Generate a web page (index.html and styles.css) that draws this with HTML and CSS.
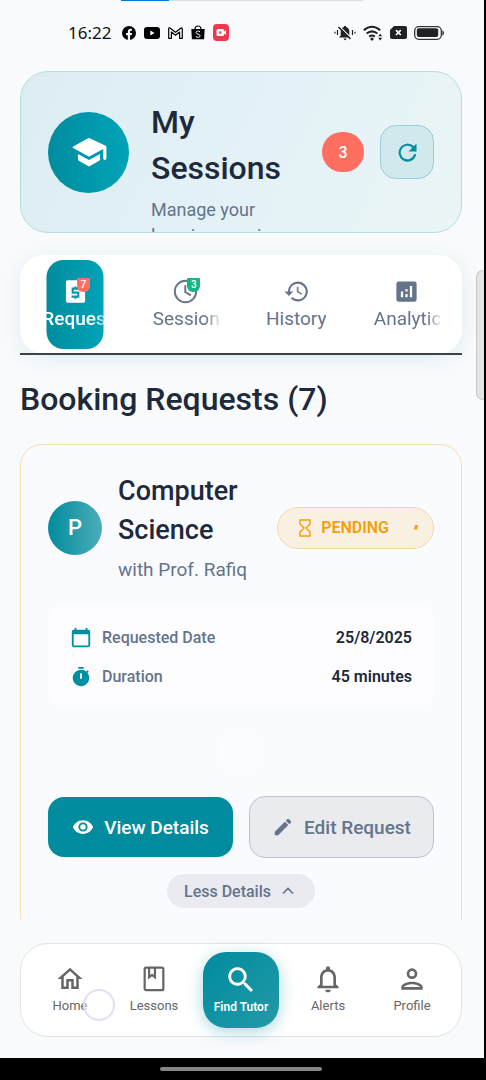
FILE: index.html
```html
<!DOCTYPE html>
<html lang="en">
<head>
<meta charset="utf-8">
<meta name="viewport" content="width=device-width, initial-scale=1">
<title>My Sessions</title>
<link rel="stylesheet" href="styles.css">
</head>
<body>
<div class="app">
  <div class="load-track"><div class="load-bar"></div></div>
  <div class="edge-handle"></div>

  <div class="status">
    <div class="status-left">
      <span class="clock">16:22</span>
      <svg width="14" height="14" viewBox="0 0 24 24"><circle cx="12" cy="12" r="12" fill="#000"/><path d="M10 24v-8H7v-4h3V9.500c0-3.300 1.900-5 4.800-5 1 0 2.200.2 2.200.2V8h-1.500c-1.300 0-1.700.8-1.700 1.600V12h3.300l-.6 4h-2.700v8z" fill="#f8fafc"/></svg>
      <svg width="16" height="12" viewBox="0 0 16 12"><rect width="16" height="12" rx="3" fill="#000"/><path d="M6.300 3.500v5l4.200-2.500z" fill="#fff"/></svg>
      <svg width="15" height="12" viewBox="0 0 15 12"><path d="M.7 11.300V1.700Q.7.700 1.700.8L7.500 5.300 13.300.8q1 0 1 1v9.500h-2.700V5L7.500 8.200 3.400 5v6.300z" fill="none" stroke="#000" stroke-width="1.200" stroke-linejoin="round"/></svg>
      <svg width="14" height="15" viewBox="0 0 14 15"><path d="M.3 4h13.400l-.6 10.200H.9z" fill="#000"/><path d="M4 4c0-4 6-4 6 0" fill="none" stroke="#000" stroke-width="1.100"/><path d="M9 6.800C7.500 5.600 5 6 5.100 7.700c.1 1.600 4 1.200 4 3.100 0 1.800-2.800 1.900-4.200.7" fill="none" stroke="#fff" stroke-width="1"/></svg>
      <svg width="16" height="17" viewBox="0 0 16 17"><rect width="16" height="17" rx="4" fill="#f0384d"/><rect x="3.500" y="5" width="7.500" height="7" rx="1.500" fill="#fff"/><path d="M10.500 8 13 6v5l-2.500-2z" fill="#fff"/><circle cx="7.200" cy="8.500" r="1.200" fill="#f0384d"/></svg>
    </div>
    <div class="status-right">
      <svg width="22" height="16" viewBox="0 0 22 16"><path d="M5 12.500 6.700 10.500V6.500C6.700 4 8.500 2.500 10 2V1h2v1c2 .5 3.300 2 3.300 4.500v4l1.700 2z" fill="#222"/><path d="M9.500 13.500h3q-.5 1.700-1.500 1.700t-1.500-1.700" fill="#222"/><path d="M5.700 1.600 17.700 13.400" stroke="#f8fafc" stroke-width="1.300"/><path d="M4.500 2 16.500 14" stroke="#222" stroke-width="1.500"/><path d="M3.500 5v5M1 6.800v1.600M18.500 5v5M21 6.800v1.600" stroke="#222" stroke-width="1.200"/></svg>
      <svg width="20" height="16" viewBox="0 0 20 16"><g fill="none" stroke="#222" stroke-width="2"><path d="M.8 5.300q8.200-7 16.400 0"/><path d="M3.600 8.600q5.400-4.500 10.800 0"/><path d="M6.200 11.600q2.800-2 5.600 0"/></g><circle cx="9" cy="14" r="1.600" fill="#222"/><path d="m15.200 11.300 2-2.600 2 2.600zM15.200 12.800l2 2.600 2-2.600z" fill="#222"/></svg>
      <svg width="17" height="13" viewBox="0 0 17 13"><path d="M4 0h11q2 0 2 2v9q0 2-2 2H2q-2 0-2-2V4z" fill="#222"/><path d="m6 4.200 4.800 4.800m0-4.800L6 9" stroke="#fff" stroke-width="1.700"/></svg>
      <svg width="30" height="14" viewBox="0 0 30 14"><rect x=".7" y=".7" width="26.600" height="12.600" rx="4" fill="#fff" stroke="#333" stroke-width="1.300"/><rect x="2.800" y="2.300" width="21.400" height="8.800" rx="2" fill="#222"/><path d="M28.300 4.300q1.700.5 1.700 2.700t-1.700 2.700z" fill="#333"/></svg>
    </div>
  </div>

  <header class="hero">
    <div class="hero-icon">
      <svg width="38" height="38" viewBox="0 0 24 24" fill="#fff"><path d="M5 13.200v3.400a1.200 1.200 0 0 0 .6 1l5.800 3.200a1.200 1.200 0 0 0 1.200 0l5.800-3.200a1.200 1.200 0 0 0 .6-1v-3.400l-7 3.800zM11.500 3.300 2 8.500a.6.600 0 0 0 0 1l9.500 5.200a1 1 0 0 0 1 0l8.500-4.600V16a1 1 0 0 0 2 0V9a1 1 0 0 0-.5-.9l-10-4.800a1 1 0 0 0-1 0z"/></svg>
    </div>
    <div class="hero-text">
      <h1>My Sessions</h1>
      <p>Manage your learning sessions</p>
    </div>
    <span class="hero-count">3</span>
    <button class="refresh" aria-label="Refresh">
      <svg width="27" height="27" viewBox="0 0 24 24" fill="#008fa0"><path d="M17.650 6.350A8 8 0 1 0 19.730 14.500a1.100 1.100 0 0 0-2.080-.5A6 6 0 1 1 16.220 7.780L13 11h7V4z"/></svg>
    </button>
  </header>

  <nav class="tabs">
    <button class="tab active">
      <span class="tab-icon"><svg width="27" height="27" viewBox="0 0 24 24"><path d="M5 2h14a1.500 1.500 0 0 1 1.500 1.500v17A1.500 1.500 0 0 1 19 22H5a1.500 1.500 0 0 1-1.500-1.500v-17A1.500 1.500 0 0 1 5 2z" fill="#fff"/><path d="M15.500 9.500H9.500V13h5v3.500h-6M12 7.500v2.500M12 16v2.500" fill="none" stroke="#0898ab" stroke-width="1.900"/></svg><span class="tab-count coral">7</span></span>
      <span class="tab-label">Requests</span>
    </button>
    <button class="tab">
      <span class="tab-icon"><svg width="27" height="27" viewBox="0 0 24 24" fill="none" stroke="#64748b" stroke-width="1.700"><circle cx="12" cy="12" r="9.500"/><path d="M11.800 6.500v6l5 3"/></svg><span class="tab-count green">3</span></span>
      <span class="tab-label">Sessions</span>
    </button>
    <button class="tab">
      <span class="tab-icon"><svg width="25" height="25" viewBox="0 0 24 24" fill="#64748b"><path d="M13.300 2.500A9.500 9.500 0 0 0 3.800 12H.5l4.200 4.300L9 12H5.800A7.500 7.500 0 1 1 8 17.300l-1.400 1.400A9.500 9.500 0 1 0 13.300 2.500zM12.300 7.500v5l4.200 2.600.8-1.300-3.500-2.100V7.500z"/></svg></span>
      <span class="tab-label">History</span>
    </button>
    <button class="tab">
      <span class="tab-icon"><svg width="27" height="27" viewBox="0 0 24 24"><rect x="3" y="3" width="18" height="18" rx="2" fill="#64748b"/><path d="M8 12v5M12 14.200V17M12 10v2M16 7v10" stroke="#fff" stroke-width="2"/></svg></span>
      <span class="tab-label">Analytics</span>
    </button>
  </nav>

  <main class="list">
    <h2>Booking Requests (7)</h2>
    <article class="card">
      <div class="card-head">
        <div class="avatar">P</div>
        <div class="card-title">
          <h3>Computer Science</h3>
          <p>with Prof. Rafiq</p>
        </div>
        <div class="badge">
          <svg width="12" height="18" viewBox="0 0 12 18" fill="none" stroke="#f59e0b" stroke-width="1.500" stroke-linejoin="round"><path d="M1 1h10v4L7 9l4 4v4H1v-4l4-4-4-4z"/></svg>
          <span>PENDING</span>
          <svg class="badge-mark" width="4" height="5" viewBox="0 0 4 5"><path d="M1 0h3L3 4.500H0z" fill="#f59e0b"/></svg>
        </div>
      </div>

      <dl class="info">
        <div class="info-row">
          <dt><svg width="22" height="22" viewBox="0 0 24 24"><path d="M20 3h-1V1h-2v2H7V1H5v2H4a2 2 0 0 0-2 2v15a2 2 0 0 0 2 2h16a2 2 0 0 0 2-2V5a2 2 0 0 0-2-2zm0 17.300H4V8h16z" fill="#008fa0"/></svg>Requested Date</dt>
          <dd>25/8/2025</dd>
        </div>
        <div class="info-row">
          <dt><svg width="22" height="22" viewBox="0 0 24 24" fill="#008fa0"><path d="M9 1h6v2H9zM19.030 7.390l1.420-1.420c-.43-.51-.9-.99-1.410-1.410l-1.420 1.420A9 9 0 1 0 19.030 7.390zM13 14h-2V8h2z"/></svg>Duration</dt>
          <dd>45 minutes</dd>
        </div>
      </dl>

      <div class="placeholder"></div>

      <div class="actions">
        <button class="btn primary"><svg width="22" height="22" viewBox="0 0 24 24" fill="#fff"><path d="M12 4.500C7 4.500 2.730 7.610 1 12c1.730 4.390 6 7.500 11 7.500s9.270-3.110 11-7.500c-1.730-4.390-6-7.500-11-7.500zM12 17a5 5 0 1 1 0-10 5 5 0 0 1 0 10zm0-8a3 3 0 1 0 0 6 3 3 0 0 0 0-6z"/></svg>View Details</button>
        <button class="btn plain"><svg width="22" height="22" viewBox="0 0 24 24" fill="#64748b"><path d="M3 17.250V21h3.750L17.810 9.940l-3.750-3.750zM20.710 7.040a1 1 0 0 0 0-1.410l-2.340-2.340a1 1 0 0 0-1.410 0l-1.830 1.830 3.750 3.750z"/></svg>Edit Request</button>
      </div>
      <button class="less">Less Details<svg width="12" height="8" viewBox="0 0 12 8" fill="none" stroke="#64748b" stroke-width="1.700"><path d="m1 6.500 5-5 5 5"/></svg></button>
    </article>
  </main>

  <nav class="bottom-nav">
    <a href="#home" class="nav-item"><svg width="30" height="30" viewBox="0 0 24 24" fill="#666"><path d="M12 5.690l5 4.500V18h-2v-6H9v6H7v-7.810zM12 3 2 12h3v8h6v-6h2v6h6v-8h3z"/></svg><span>Home</span></a>
    <a href="#lessons" class="nav-item"><svg width="28" height="30" viewBox="0 0 24 24" fill="none" stroke="#666" stroke-width="1.900"><rect x="4" y="2.200" width="16" height="19.400" rx="1.300"/><path d="M7.800 2.500v8l2.500-2 2.500 2v-8"/></svg><span>Lessons</span></a>
    <a href="#find" class="nav-find"><svg width="34" height="34" viewBox="0 0 24 24" fill="#fff"><path d="M15.500 14h-.79l-.28-.27A6.500 6.500 0 1 0 13.730 14.430l.27.28v.79l5 4.990L20.490 19zm-6 0a4.500 4.500 0 1 1 0-9 4.500 4.500 0 0 1 0 9z"/></svg><span>Find Tutor</span></a>
    <a href="#alerts" class="nav-item"><svg width="32" height="32" viewBox="0 0 24 24" fill="#666"><path d="M12 22a2 2 0 0 0 2-2h-4a2 2 0 0 0 2 2zm6-6v-5c0-3.070-1.630-5.640-4.500-6.320V4a1.500 1.500 0 0 0-3 0v.68C7.640 5.360 6 7.920 6 11v5l-2 2v1h16v-1zm-2 1H8v-6c0-2.480 1.510-4.500 4-4.500s4 2.020 4 4.500z"/></svg><span>Alerts</span></a>
    <a href="#profile" class="nav-item"><svg width="32" height="32" viewBox="0 0 24 24" fill="#666"><path d="M12 6a2 2 0 1 1 0 4 2 2 0 0 1 0-4m0 10c2.700 0 5.800 1.290 6 2H6c.23-.72 3.310-2 6-2m0-12a4 4 0 1 0 0 8 4 4 0 0 0 0-8zm0 10c-2.670 0-8 1.340-8 4v2h16v-2c0-2.660-5.330-4-8-4z"/></svg><span>Profile</span></a>
    <div class="touch"></div>
  </nav>
</div>
<div class="system-bar"><div class="gesture"></div></div>
</body>
</html>
```
FILE: styles.css
```css
* { box-sizing: border-box; }
body {
  margin: 0;
  height: 100vh;
  display: flex;
  flex-direction: column;
  background: #000;
  color: #1e293b;
  font-family: Roboto, "Liberation Sans", sans-serif;
}
h1, h2, h3, p, dl, dd { margin: 0; }
h1, h2, h3 { font-weight: 500; }
button { font-family: inherit; border: 0; padding: 0; cursor: pointer; }
a { text-decoration: none; }
svg { display: block; flex: none; }

.app {
  position: relative;
  flex: 1;
  min-height: 0;
  display: flex;
  flex-direction: column;
  margin-right: 2px;
  padding: 0 22px 21px 20px;
  background: #f8fafc;
}
.load-track {
  position: absolute;
  top: 0;
  left: 25%;
  width: 50%;
  height: 1px;
  background: #dedede;
}
.load-bar { width: 20%; height: 100%; background: #0078d7; }
.edge-handle {
  position: absolute;
  top: 270px;
  right: 0;
  width: 8px;
  height: 130px;
  border: 1px solid #c8c8c8;
  border-right: 0;
  border-radius: 7px 0 0 7px;
  background: #e4e4e5;
}

.status {
  flex: none;
  display: flex;
  justify-content: space-between;
  align-items: center;
  height: 71px;
  padding: 0 18px 6px 48px;
}
.status-left, .status-right { display: flex; align-items: center; }
.status-left { gap: 8px; }
.status-right { gap: 7px; }
.clock {
  margin-right: 3px;
  color: #111;
  font-family: "Noto Sans", sans-serif;
  font-size: 17px;
}

.hero {
  flex: none;
  display: flex;
  align-items: center;
  height: 162px;
  padding: 0 27px;
  border: 1px solid #b5dce0;
  border-radius: 28px;
  background: linear-gradient(115deg, #dcedf2, #e4f2f7 55%, #eaf5f5);
  overflow: hidden;
}
.hero-icon {
  flex: none;
  display: grid;
  place-items: center;
  width: 81px;
  height: 81px;
  border-radius: 50%;
  background: linear-gradient(90deg, #008c9e, #00a3b8);
}
.hero-text {
  flex: 1;
  min-width: 0;
  align-self: flex-start;
  padding: 27px 0 0 22px;
}
.hero h1 { font-size: 32px; line-height: 46px; }
.hero p {
  padding-top: 6px;
  color: #64748b;
  font-size: 18px;
  line-height: 26px;
}
.hero-count {
  display: grid;
  place-items: center;
  width: 42px;
  height: 40px;
  margin: 0 16px 0 24px;
  border-radius: 20px;
  background: #ff6f61;
  color: #fff;
  font-size: 16px;
  font-weight: 500;
}
.refresh {
  flex: none;
  display: grid;
  place-items: center;
  width: 54px;
  height: 54px;
  border: 1px solid #97cfd7;
  border-radius: 16px;
  background: #d1e8ec;
}

.tabs {
  position: relative;
  flex: none;
  display: flex;
  height: 99px;
  margin-top: 22px;
  border-radius: 24px;
  background: #fff;
  box-shadow: 0 4px 18px #008c9e1c;
}
.tabs::after {
  content: "";
  position: absolute;
  left: 0;
  right: 0;
  bottom: -1px;
  height: 2px;
  background: #3e4244;
}
.tab {
  position: relative;
  flex: 1;
  display: flex;
  flex-direction: column;
  align-items: center;
  padding-top: 23px;
  background: none;
  color: #64748b;
}
.tab.active { color: #fff; font-weight: 500; }
.tab.active::before {
  content: "";
  position: absolute;
  top: 5px;
  bottom: 5px;
  left: 50%;
  width: 57px;
  transform: translateX(-50%);
  border-radius: 17px;
  background: linear-gradient(90deg, #008c9e, #00a3b8);
}
.tab-icon {
  position: relative;
  display: grid;
  place-items: center;
  height: 27px;
}
.tab-count {
  position: absolute;
  top: 0;
  right: -1px;
  width: 13px;
  height: 14px;
  border-radius: 1px 1px 6px 6px;
  color: #fff;
  font-size: 10px;
  font-weight: 500;
  line-height: 13px;
  text-align: center;
}
.coral { background: #ff6f61; }
.green { background: #10b981; }
.tab-label {
  position: relative;
  width: 66px;
  font-size: 19px;
  line-height: 28px;
  text-align: left;
  white-space: nowrap;
  overflow: hidden;
  mask-image: linear-gradient(90deg, #000 80%, #0003);
}
.tab:nth-child(3) .tab-label { width: auto; mask-image: none; }

.list { flex: 1; min-height: 0; overflow: hidden; }
.list h2 { padding: 21px 0; font-size: 32px; line-height: 48px; }
.card {
  padding: 27px 27px 29px;
  border: 1px solid #f8ddb0;
  border-radius: 22px;
  background: #fafbfe;
}
.card-head { display: flex; align-items: center; gap: 16px; }
.avatar {
  flex: none;
  display: grid;
  place-items: center;
  width: 54px;
  height: 54px;
  border-radius: 50%;
  background: linear-gradient(90deg, #008c9e, #4dacb8);
  color: #fff;
  font-size: 22px;
  font-weight: 500;
}
.card-title { flex: 1; min-width: 0; }
.card-title h3 { font-size: 27px; line-height: 39px; }
.card-title p {
  padding-top: 6px;
  color: #64748b;
  font-size: 19px;
  line-height: 27px;
  white-space: nowrap;
}
.badge {
  display: flex;
  align-items: center;
  gap: 10px;
  height: 42px;
  padding: 0 15px 0 21px;
  border: 1px solid #f5d9a8;
  border-radius: 21px;
  background: #f9f0e2;
  color: #f59e0b;
  font-size: 16px;
  font-weight: 600;
}
.badge-mark { margin-left: 15px; }

.info {
  display: flex;
  flex-direction: column;
  gap: 13px;
  margin-top: 21px;
  padding: 21px 22px 18px;
  border-radius: 16px;
  background: #fdfdff;
}
.info-row { display: flex; justify-content: space-between; align-items: center; line-height: 26px; font-size: 16px; }
.info dt { display: flex; align-items: center; gap: 10px; color: #64748b; font-weight: 500; }
.info dd { font-weight: 600; }
.placeholder {
  width: 42px;
  height: 42px;
  margin: 24px auto 22px;
  border-radius: 14px;
  background: #fbfcfe;
}
.actions { display: grid; grid-template-columns: 1fr 1fr; align-items: center; gap: 16px; }
.btn {
  display: flex;
  justify-content: center;
  align-items: center;
  gap: 10px;
  border-radius: 16px;
  font-size: 19px;
  font-weight: 500;
  white-space: nowrap;
}
.primary { height: 60px; background: #008c9e; color: #fff; }
.plain { height: 62px; border: 1px solid #bcc3d0; background: #e9ebef; color: #64748b; }
.less {
  display: flex;
  align-items: center;
  gap: 11px;
  height: 34px;
  margin: 16px auto 0;
  padding: 0 21px 0 17px;
  border-radius: 17px;
  background: #e9ebf0;
  color: #64748b;
  font-size: 16px;
  font-weight: 500;
}

.bottom-nav {
  position: relative;
  flex: none;
  display: flex;
  justify-content: space-between;
  align-items: center;
  height: 94px;
  margin-top: 23px;
  padding: 0 7px;
  border: 1px solid #e1e4e6;
  border-radius: 28px;
  background: #fff;
}
.nav-item, .nav-find {
  display: flex;
  flex-direction: column;
  align-items: center;
}
.nav-item {
  flex: 1;
  color: #666;
  font-size: 13px;
  line-height: 22px;
}
.nav-item svg { height: 32px; }
.nav-find {
  justify-content: center;
  width: 76px;
  height: 76px;
  margin: 0 7px;
  border-radius: 23px;
  background: linear-gradient(135deg, #008c9e, #2399a8);
  box-shadow: 0 4px 16px #008c9e55;
  color: #fff;
  font-size: 12px;
  font-weight: 600;
  line-height: 20px;
}
.touch {
  position: absolute;
  left: 62px;
  top: 45px;
  width: 32px;
  height: 32px;
  border: 2px solid #e0e0f5;
  border-radius: 50%;
  background: #ffffff66;
}
.system-bar {
  flex: none;
  display: flex;
  justify-content: center;
  align-items: flex-start;
  height: 22px;
  padding: 9px 4px 0 0;
}
.gesture { width: 162px; height: 4px; border-radius: 2px; background: #858585; }
```
